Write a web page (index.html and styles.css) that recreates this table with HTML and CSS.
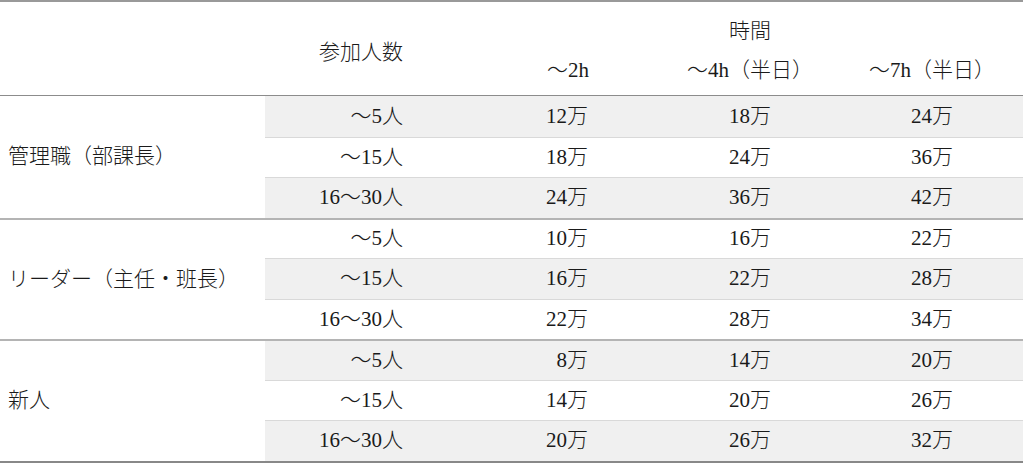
FILE: index.html
```html
<!DOCTYPE html>
<html lang="ja">
<head>
<meta charset="utf-8">
<title>料金表</title>
<link rel="stylesheet" href="styles.css">
</head>
<body>
<table class="price">
  <colgroup>
    <col class="col-role">
    <col class="col-count">
    <col class="col-t1">
    <col class="col-t2">
    <col class="col-t3">
  </colgroup>
  <thead>
    <tr class="head-top">
      <th rowspan="2" class="blank"></th>
      <th rowspan="2" class="count">参加人数</th>
      <th colspan="3" class="time">時間</th>
    </tr>
    <tr class="head-sub">
      <th class="t1">～2h</th>
      <th class="t2">～4h（半日）</th>
      <th class="t3">～7h（半日）</th>
    </tr>
  </thead>
  <tbody class="group first">
    <tr class="shade">
      <th rowspan="3" class="role">管理職（部課長）</th>
      <td class="count">～5人</td><td class="t1">12万</td><td class="t2">18万</td><td class="t3">24万</td>
    </tr>
    <tr>
      <td class="count">～15人</td><td class="t1">18万</td><td class="t2">24万</td><td class="t3">36万</td>
    </tr>
    <tr class="shade">
      <td class="count">16～30人</td><td class="t1">24万</td><td class="t2">36万</td><td class="t3">42万</td>
    </tr>
  </tbody>
  <tbody class="group">
    <tr>
      <th rowspan="3" class="role">リーダー（主任・班長）</th>
      <td class="count">～5人</td><td class="t1">10万</td><td class="t2">16万</td><td class="t3">22万</td>
    </tr>
    <tr class="shade">
      <td class="count">～15人</td><td class="t1">16万</td><td class="t2">22万</td><td class="t3">28万</td>
    </tr>
    <tr>
      <td class="count">16～30人</td><td class="t1">22万</td><td class="t2">28万</td><td class="t3">34万</td>
    </tr>
  </tbody>
  <tbody class="group last">
    <tr class="shade">
      <th rowspan="3" class="role">新人</th>
      <td class="count">～5人</td><td class="t1">8万</td><td class="t2">14万</td><td class="t3">20万</td>
    </tr>
    <tr>
      <td class="count">～15人</td><td class="t1">14万</td><td class="t2">20万</td><td class="t3">26万</td>
    </tr>
    <tr class="shade">
      <td class="count">16～30人</td><td class="t1">20万</td><td class="t2">26万</td><td class="t3">32万</td>
    </tr>
  </tbody>
</table>
</body>
</html>
```

FILE: styles.css
```css
html, body {
  margin: 0;
  padding: 0;
  background: #ffffff;
}

body {
  font-family: "Liberation Serif", "Noto Sans CJK JP", serif;
  font-size: 21px;
  font-weight: 300;
  color: #1a1a1a;
}

.price {
  width: 1023px;
  border-collapse: separate;
  border-spacing: 0;
  table-layout: fixed;
  border-top: 2px solid #999999;
  border-bottom: 2px solid #888888;
}

.col-role { width: 265px; }
.col-count { width: 212px; }
.col-t1 { width: 182px; }
.col-t2 { width: 182px; }
.col-t3 { width: 182px; }

th, td {
  box-sizing: border-box;
  padding: 0;
  font-weight: 300;
  vertical-align: middle;
  line-height: 1.2;
}

.head-top th {
  height: 53px;
}

.head-top .time {
  text-align: center;
  padding-top: 6px;
}

.head-top .blank,
.head-sub th {
  border-bottom: 1.5px solid #8c8c8c;
}

.head-top .count {
  text-align: right;
  padding-right: 74px;
  padding-top: 8px;
  border-bottom: 1.5px solid #8c8c8c;
}

.head-sub th {
  height: 41px;
  padding-bottom: 8px;
}

.head-sub .t1 {
  text-align: right;
  padding-right: 70px;
}

.head-sub .t2,
.head-sub .t3 {
  text-align: center;
}

tbody td {
  height: 40px;
  border-top: 1px solid #d9d9d9;
}

tbody tr.shade td {
  height: 41px;
  background: #f0f0f0;
}

tbody tr:first-child td {
  border-top: none;
}

tbody.group + tbody.group tr:first-child td,
tbody.group + tbody.group tr:first-child th {
  border-top: 2px solid #b4b4b4;
}

tbody .role {
  text-align: left;
  padding-left: 8px;
  background: #ffffff;
}

tbody .count {
  text-align: right;
  padding-right: 74px;
}

tbody .t1 {
  text-align: right;
  padding-right: 71px;
}

tbody .t2,
tbody .t3 {
  text-align: center;
}
```
